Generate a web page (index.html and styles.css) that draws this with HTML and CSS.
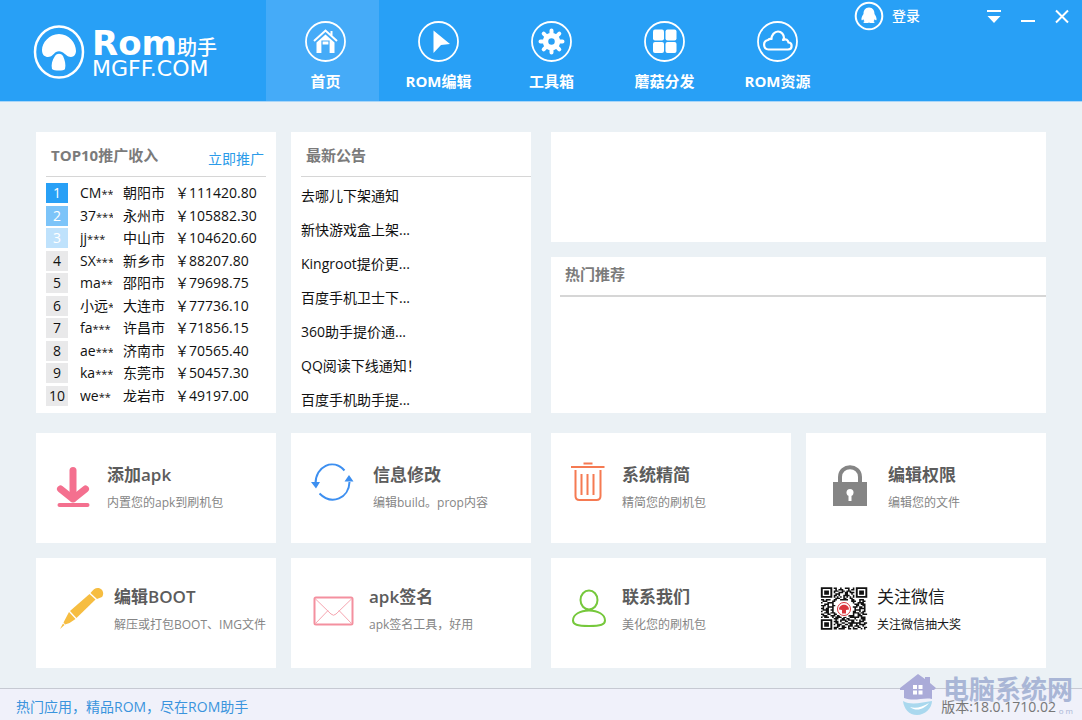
FILE: index.html
```html
<!DOCTYPE html>
<html lang="zh-CN">
<head>
<meta charset="utf-8">
<title>Rom助手</title>
<link rel="stylesheet" href="styles.css">
</head>
<body>
<header class="header">
  <div class="logo">
    <svg class="logo-mark" width="52" height="54" viewBox="0 0 52 54">
      <ellipse cx="26" cy="27" rx="24" ry="25.500" fill="none" stroke="#fff" stroke-width="2.500"/>
      <path fill="#fff" d="M26 9C16 9 9 18 9 25c0 5 3 7 6 7 4 0 5-3 8-5 2-1 4-1 6 0 4 2 5 5 9 5 3 0 5-3 5-6C43 18 36 9 26 9z"/>
      <path fill="#fff" d="M22 31c2-3 6-3 8 0 2 4 3 9 2 13-1 2-11 2-13 0-1-4 0-9 3-13z"/>
    </svg>
    <div class="logo-words">
      <div class="logo-top"><span class="logo-rom">Rom</span><span class="logo-cn">助手</span></div>
      <div class="logo-site">MGFF.COM</div>
    </div>
  </div>
  <nav class="nav">
    <a class="nav-item nav-item-active" href="#home">
      <svg width="41" height="41" viewBox="0 0 41 41" fill="none" stroke="#fff"><circle cx="20.500" cy="20.500" r="19.500" stroke-width="1.800"/><path stroke-width="2" d="M9 20 20.500 9.500 32 20M26.500 14.500V10"/><path fill="#fff" stroke="none" d="M11.500 21.500 20.500 13.500l9 8V32H24v-8h-7v8h-5.500z"/><path stroke="#45abf8" stroke-width="1.200" d="M17 32V20h7v12M17 24h7"/></svg>
      <span>首页</span></a>
    <a class="nav-item" href="#edit">
      <svg width="41" height="41" viewBox="0 0 41 41"><circle cx="20.500" cy="20.500" r="19.500" fill="none" stroke="#fff" stroke-width="1.800"/><path fill="#fff" d="M15.500 9.500 32 23l-9 1-7.500 8z"/></svg>
      <span>ROM编辑</span></a>
    <a class="nav-item" href="#tools">
      <svg width="41" height="41" viewBox="0 0 41 41" fill="none" stroke="#fff"><circle cx="20.500" cy="20.500" r="19.500" stroke-width="1.800"/><circle cx="20.500" cy="20.500" r="6" stroke-width="5.500"/><path stroke-width="4" stroke-linecap="round" d="M20.500 9.500v3m0 16v3M9.500 20.500h3m16 0h3M12.700 12.700l2.200 2.200m11.200 11.200 2.200 2.200m0-15.600-2.200 2.200M14.900 26.100l-2.200 2.200"/></svg>
      <span>工具箱</span></a>
    <a class="nav-item" href="#share">
      <svg width="41" height="41" viewBox="0 0 41 41"><circle cx="20.500" cy="20.500" r="19.500" fill="none" stroke="#fff" stroke-width="1.800"/><g fill="#fff"><rect x="9" y="8.500" width="11" height="11" rx="2"/><rect x="21.500" y="8.500" width="11" height="11" rx="2"/><rect x="9" y="21" width="11" height="11" rx="2"/><rect x="21.500" y="21" width="11" height="11" rx="2"/></g></svg>
      <span>蘑菇分发</span></a>
    <a class="nav-item" href="#source">
      <svg width="41" height="41" viewBox="0 0 41 41" fill="none" stroke="#fff"><circle cx="20.500" cy="20.500" r="19.500" stroke-width="1.800"/><path stroke-width="2.200" stroke-linejoin="round" d="M11.500 28.500a4.800 4.800 0 0 1-.5-9.500c1-1 2.500-1.200 3.500-1 0-4 3-7.500 6.500-7.500s6 3 6 6.500l-1 2c3-1.500 5 0 5.500 2.500 4 0 4.500 7-.5 7z"/></svg>
      <span>ROM资源</span></a>
  </nav>
  <div class="account">
    <button class="login" type="button">
      <svg width="30" height="30" viewBox="0 0 30 30"><circle cx="15" cy="15" r="13.300" fill="none" stroke="#fff" stroke-width="2"/><path fill="#fff" d="M15 6.500c-4 0-5.500 3-5.500 6.500-1 1.500-2.500 4-2 6 .5.600 1.300-.3 1.800-.8.200.8.600 1.400 1.200 2-1.500.4-1.500 1.800 0 1.800h3.500l1-.6 1 .6h3.500c1.500 0 1.500-1.400 0-1.800.6-.6 1-1.200 1.200-2 .5.500 1.300 1.400 1.800.8.500-2-1-4.500-2-6 0-3.500-1.500-6.500-5.500-6.500z"/></svg>
      <span>登录</span></button>
    <div class="window-buttons">
      <button type="button" aria-label="菜单"><svg width="16" height="16" viewBox="0 0 16 16" fill="#fff"><path d="M1 2h14v2H1zM1.500 8h13L8 15z"/></svg></button>
      <button type="button" aria-label="最小化"><svg width="16" height="16" viewBox="0 0 16 16" fill="#fff"><path d="M1 12h14v2H1z"/></svg></button>
      <button type="button" aria-label="关闭"><svg width="16" height="16" viewBox="0 0 16 16" stroke="#fff" stroke-width="2"><path d="M2 2.500l12 12M14 2.500l-12 12"/></svg></button>
    </div>
  </div>
</header>

<main class="main">
  <div class="half">
    <section class="panel income">
      <div class="panel-head">
        <h2>TOP10推广收入</h2>
        <a href="#promote">立即推广</a>
      </div>
      <table class="rank">
        <tr><td><span class="badge badge-1">1</span></td><td><div class="name">CM<i>***</i></div></td><td>朝阳市</td><td>￥111420.80</td></tr>
        <tr><td><span class="badge badge-2">2</span></td><td><div class="name">37<i>***</i></div></td><td>永州市</td><td>￥105882.30</td></tr>
        <tr><td><span class="badge badge-3">3</span></td><td><div class="name">jj<i>***</i></div></td><td>中山市</td><td>￥104620.60</td></tr>
        <tr><td><span class="badge">4</span></td><td><div class="name">SX<i>***</i></div></td><td>新乡市</td><td>￥88207.80</td></tr>
        <tr><td><span class="badge">5</span></td><td><div class="name">ma<i>**</i></div></td><td>邵阳市</td><td>￥79698.75</td></tr>
        <tr><td><span class="badge">6</span></td><td><div class="name">小远<i>*</i></div></td><td>大连市</td><td>￥77736.10</td></tr>
        <tr><td><span class="badge">7</span></td><td><div class="name">fa<i>***</i></div></td><td>许昌市</td><td>￥71856.15</td></tr>
        <tr><td><span class="badge">8</span></td><td><div class="name">ae<i>***</i></div></td><td>济南市</td><td>￥70565.40</td></tr>
        <tr><td><span class="badge">9</span></td><td><div class="name">ka<i>***</i></div></td><td>东莞市</td><td>￥50457.30</td></tr>
        <tr><td><span class="badge">10</span></td><td><div class="name">we<i>**</i></div></td><td>龙岩市</td><td>￥49197.00</td></tr>
      </table>
    </section>
    <section class="panel notices">
      <div class="panel-head"><h2>最新公告</h2></div>
      <ul>
        <li>去哪儿下架通知</li>
        <li>新快游戏盒上架...</li>
        <li>Kingroot提价更...</li>
        <li>百度手机卫士下...</li>
        <li>360助手提价通...</li>
        <li>QQ阅读下线通知！</li>
        <li>百度手机助手提...</li>
      </ul>
    </section>
  </div>
  <div class="side">
    <section class="panel banner"></section>
    <section class="panel hot"><h2>热门推荐</h2></section>
  </div>

  <div class="half">
    <a class="tile" href="#add">
      <svg width="71" height="110" viewBox="0 0 71 110" fill="none" stroke="#f4708f" stroke-linecap="round"><path stroke-width="7" d="M37 37.500v28"/><path stroke-width="7" stroke-linejoin="round" d="M24.500 56 37 66 49.500 56"/><path stroke-width="4" d="M23.500 72h28"/></svg>
      <div class="tile-text"><h3>添加apk</h3><p>内置您的apk到刷机包</p></div></a>
    <a class="tile" href="#info">
      <svg width="82" height="110" viewBox="0 0 82 110" fill="none" stroke="#3d8ff0" stroke-width="2"><path d="M24.500 51C24.500 33 42 25 53.500 37.500M58.500 49C58 65 41 73 28.500 60.500"/><path fill="#3d8ff0" stroke="none" d="M20 49h9l-4 6.500zM53.500 48.500h9l-4.500-6.500z"/></svg>
      <div class="tile-text"><h3>信息修改</h3><p>编辑build。prop内容</p></div></a>
  </div>
  <div class="half">
    <a class="tile" href="#slim">
      <svg width="71" height="110" viewBox="0 0 71 110" fill="none" stroke="#f57a52" stroke-width="2"><path d="M20 34h33.500M32.500 30.500h9M24.500 37v26q0 4 4 4h17q4 0 4-4V37M30.500 41v21M36.500 41v21M42.500 41v21"/></svg>
      <div class="tile-text"><h3>系统精简</h3><p>精简您的刷机包</p></div></a>
    <a class="tile" href="#permission">
      <svg width="82" height="110" viewBox="0 0 82 110"><path fill="#858585" d="M27 49h34v24H27z"/><path fill="none" stroke="#858585" stroke-width="4" d="M34 50v-6c0-13 20-13 20 0v6"/><circle cx="44" cy="59.500" r="3.500" fill="#fff"/><path fill="#fff" d="M42.500 60h3v8h-3z"/></svg>
      <div class="tile-text"><h3>编辑权限</h3><p>编辑您的文件</p></div></a>
  </div>

  <div class="half last">
    <a class="tile" href="#boot">
      <svg width="78" height="110" viewBox="0 0 78 110" fill="#f6bd41"><path d="M53.500 36l6 5.500L40.500 60l-6.500-7z"/><path d="M54.500 35c3-4 6-6 9.500-4.500s4 6 2 8.500l-5 2z"/><path d="M33 54l6.500 7-6 4-4.500 1.500-1.500-2zM27 65.500l1.500 1.500-4.500 4z"/></svg>
      <div class="tile-text"><h3>编辑BOOT</h3><p>解压或打包BOOT、IMG文件</p></div></a>
    <a class="tile" href="#sign">
      <svg width="78" height="110" viewBox="0 0 78 110" fill="none" stroke="#f4909f"><rect x="23.500" y="39.500" width="38" height="27" rx="1.500" stroke-width="2"/><path stroke-width="1" stroke="#f6a5b0" d="M24 40.500 40 56q2.500 2.500 5 0l16-15.500M24 66l13-13.500M61 66 48 52.500"/></svg>
      <div class="tile-text"><h3>apk签名</h3><p>apk签名工具，好用</p></div></a>
  </div>
  <div class="half last">
    <a class="tile" href="#contact">
      <svg width="71" height="110" viewBox="0 0 71 110" fill="none" stroke="#76c83c" stroke-width="2"><ellipse cx="38" cy="42" rx="8.500" ry="9.500"/><path d="M38 52.500c-9 0-16 4-16 10 0 4 4 5.500 16 5.500s16-1.500 16-5.500c0-6-7-10-16-10z"/></svg>
      <div class="tile-text"><h3>联系我们</h3><p>美化您的刷机包</p></div></a>
    <a class="tile tile-dark" href="#wechat">
      <svg width="71" height="110" viewBox="0 0 71 110">
        <g transform="translate(15 29.500) scale(1.590 1.450)">
          <g fill="none" stroke="#111"><path stroke-width="1.200" d="M.5.500h6v6h-6zM22.500.500h6v6h-6zM.5 22.500h6v6h-6z"/><path stroke-width="3" d="M2 3.500h3M24 3.500h3M2 25.500h3"/>
          <path d="M8 .5h2m2 0h1m2 0h3m2 0h1M9 1.500h1m1 0h3m3 0h1m1 0h2M8 2.500h3m2 0h2m1 0h3M8 3.500h1m2 0h3m1 0h2m1 0h3M9 4.500h3m3 0h2m2 0h1M8 5.500h2m1 0h1m2 0h4m2 0h1M8 6.500h1m1 0h1m1 0h1m1 0h1m1 0h1m1 0h1m1 0h1M9 7.500h3m2 0h2m2 0h2M0 8.500h2m1 0h3m2 0h2m2 0h5m2 0h2m3 0h3M1 9.500h3m3 0h2m10 0h3m2 0h1m1 0h2M0 10.500h1m3 0h4m12 0h1m2 0h4M2 11.500h3m2 0h1m13 0h3m1 0h3M0 12.500h3m1 0h1m2 0h2m13 0h2m2 0h2M1 13.500h1m2 0h4m12 0h3m1 0h2m1 0h1M0 14.500h2m1 0h2m2 0h1m13 0h1m2 0h4M1 15.500h4m1 0h2m13 0h4m2 0h1M0 16.500h1m2 0h2m2 0h1m12 0h2m2 0h1m1 0h2M2 17.500h3m1 0h3m11 0h4m1 0h2M0 18.500h2m2 0h2m2 0h2m10 0h1m2 0h2m1 0h3M1 19.500h3m2 0h3m1 0h2m5 0h4m2 0h3M0 20.500h1m1 0h3m2 0h1m1 0h4m1 0h2m2 0h6m1 0h3M8 21.500h3m2 0h2m1 0h2m3 0h1m3 0h3M9 22.500h1m2 0h4m1 0h4m1 0h1m1 0h1m1 0h2M8 23.500h3m1 0h1m2 0h2m2 0h2m3 0h3M9 24.500h2m2 0h2m2 0h8m2 0h2M8 25.500h1m1 0h3m2 0h2m1 0h2m2 0h1m1 0h4M10 26.500h2m1 0h2m2 0h3m1 0h3m2 0h1M8 27.500h3m2 0h3m1 0h1m2 0h1m2 0h2m2 0h2M8 28.500h2m1 0h4m2 0h2m1 0h3m2 0h1m1 0h1"/></g>
        </g>
        <circle cx="38" cy="51" r="8" fill="#fff"/><circle cx="38" cy="51" r="6.500" fill="#fff" stroke="#d9353c" stroke-width="1"/><path fill="#d9353c" d="M33 51.500c0-6.500 10-6.500 10 0l-3 .5v3.500h-4V52z"/>
      </svg>
      <div class="tile-text"><h3>关注微信</h3><p>关注微信抽大奖</p></div></a>
  </div>
</main>

<footer class="footer">
  <span class="slogan">热门应用，精品ROM，尽在ROM助手</span>
  <div class="watermark" aria-hidden="true">
    <svg width="38" height="44" viewBox="0 0 38 44"><path fill="#aaabd8" d="M19 1 26 6V4h5v6l6 5-2 2h-2v9c-9-2-17 3-28-1v-8H1v-2z"/><path fill="#fff" d="M14 12h4v4h-4zM19.500 12h4v4h-4zM14 17.500h4v4h-4zM19.500 17.500h4v4h-4z"/><path fill="#a9d8ee" d="M4 28c9 5 19 1 29 0 0 7-7 14-15 14S5 36 4 28z"/><path fill="#fff" d="M11 34c6 2 12 0 19-4-5 6-12 9-19 4z"/></svg>
    <div class="watermark-words"><b>电脑系统网</b><small>o m</small></div>
  </div>
  <span class="version">版本:18.0.1710.02</span>
</footer>
</body>
</html>
```
FILE: styles.css
```css
* { box-sizing: border-box; }

body {
  margin: 0;
  min-height: 100vh;
  display: flex;
  flex-direction: column;
  background: #ebf1f5;
  color: #111;
  font: 14px/20px "Open Sans", "Noto Sans CJK SC", sans-serif;
}

h2, h3, p, ul { margin: 0; padding: 0; }
a { text-decoration: none; }
svg { display: block; flex: none; }
button { border: 0; padding: 0; background: none; color: inherit; font: inherit; cursor: pointer; }

/* Header */
.header {
  display: flex;
  background: #28a0f6;
  color: #fff;
  border-bottom: 1px solid #a9d6f8;
}
.logo {
  flex: none;
  display: flex;
  align-items: flex-start;
  gap: 7px;
  width: 266px;
  padding: 25px 0 0 33px;
}
.logo-words { font-family: "DejaVu Sans", "Noto Sans CJK SC", sans-serif; white-space: nowrap; }
.logo-top { display: flex; align-items: baseline; height: 32px; line-height: 36px; }
.logo-rom { font-size: 34px; font-weight: bold; }
.logo-cn { font-size: 20px; font-weight: 500; }
.logo-site { font-size: 22px; line-height: 24px; }

.nav { display: flex; }
.nav-item {
  display: flex;
  flex-direction: column;
  align-items: center;
  gap: 9px;
  width: 113px;
  padding: 21px 0 10px 6px;
  color: #fff;
  font-size: 15px;
  font-weight: bold;
  white-space: nowrap;
}
.nav-item-active { background: #45abf8; }

.account {
  flex: 1;
  display: flex;
  justify-content: space-between;
  align-items: flex-start;
  padding: 1px 12px 0 23px;
}
.login { display: flex; align-items: center; gap: 8px; font-weight: 500; white-space: nowrap; }
.window-buttons { display: flex; gap: 18px; padding-top: 7px; }

/* Content grid */
.main {
  flex: 1;
  display: grid;
  grid-template-columns: 1fr 1fr;
  align-content: start;
  gap: 20px;
  padding: 30px 36px 20px;
}
.half { display: grid; grid-template-columns: 1fr 1fr; gap: 15px; }
.last { margin-top: -5px; }
.side { display: flex; flex-direction: column; gap: 15px; }
.panel { background: #fff; min-width: 0; }
.panel h2 { color: #7b7b7b; font-size: 15px; line-height: 20px; }

.panel-head {
  display: flex;
  justify-content: space-between;
  height: 45px;
  padding: 13px 2px 0 5px;
  border-bottom: 1px solid #d6d6d6;
}
.panel-head a { color: #2b9be9; padding-top: 4px; }

.income { padding: 0 10px 6px; }
.rank { width: 100%; height: 225px; margin-top: 5px; border-collapse: collapse; white-space: nowrap; }
.rank td { padding: 0; }
.rank td:nth-child(1) { width: 34px; }
.rank td:nth-child(2) { width: 43px; }
.rank td:nth-child(3) { width: 52px; }
.name { width: 33px; height: 20px; overflow: hidden; }
.name i { font-style: normal; font-size: 11px; line-height: 1; }
.badge { display: block; width: 22px; text-align: center; background: #e9e9ea; }
.badge-1 { background: #28a0f6; color: #fff; }
.badge-2 { background: #7cc4f9; color: #fff; }
.badge-3 { background: #bfe2fc; color: #fff; }

.notices { padding-left: 10px; }
.notices ul { display: flex; flex-direction: column; gap: 14px; padding-top: 9px; list-style: none; white-space: nowrap; }

.banner { height: 110px; }
.hot { flex: 1; padding-left: 9px; }
.hot h2 { height: 40px; padding: 7px 0 0 5px; border-bottom: 2px solid #d6d6d6; }

/* Tiles */
.tile { display: flex; min-width: 0; background: #fff; color: #858585; white-space: nowrap; }
.tile-text { padding-top: 30px; }
.last .tile-text { padding-top: 27px; }
.tile h3 { color: #5c5c5c; font-size: 17px; line-height: 24px; font-weight: 600; }
.tile p { padding-top: 6px; font-size: 12px; line-height: 20px; }
.tile-dark, .tile-dark h3 { color: #1a1a1a; }
.tile-dark h3 { font-weight: normal; }

/* Footer */
.footer {
  position: relative;
  display: flex;
  justify-content: space-between;
  padding: 8px 26px 3px 16px;
  background: #f0f1fa;
  border-top: 1px solid #c6c9d2;
}
.slogan { color: #3a94dd; }
.version { position: relative; color: #777; }
.watermark { position: absolute; right: 9px; bottom: 3px; display: flex; gap: 6px; color: #a9b6d6; white-space: nowrap; }
.watermark-words { display: flex; flex-direction: column; }
.watermark b { font-size: 26px; line-height: 32px; }
.watermark small { font-size: 8px; line-height: 12px; text-align: right; }
```
